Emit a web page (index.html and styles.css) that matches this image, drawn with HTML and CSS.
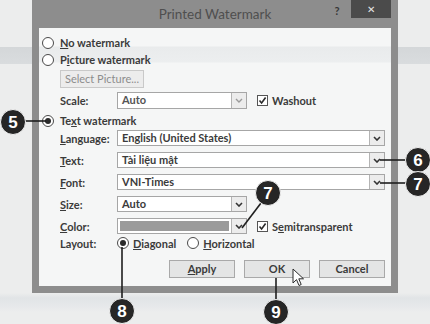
FILE: index.html
```html
<!doctype html>
<html lang="en">
<head>
    <meta charset="UTF-8">
    <title>Printed Watermark</title>
    <link rel="stylesheet" href="styles.css">
</head>
<body>
    <div class="page">
        <div class="dialog">
            <div class="titlebar">
                <span class="title">Printed Watermark</span>
                <span class="help">?</span>
                <span class="close">&#x2715;</span>
            </div>

            <div class="content">
                <div class="opt"><span class="radio"></span><span><u>N</u>o watermark</span></div>
                <div class="opt"><span class="radio"></span><span>P<u>i</u>cture watermark</span></div>
                <div class="select-btn">Select Picture...</div>

                <div class="field scale-row">
                    <span class="label">Scale:</span>
                    <div class="combo"><span class="val">Auto</span><span class="arrow"><svg width="8" height="5" viewBox="0 0 8 5"><path d="M1 1 L4 4 L7 1" fill="none" stroke="#9a9a9a" stroke-width="1.4"/></svg></span></div>
                    <div class="check"><span class="box"><svg width="9" height="9" viewBox="0 0 9 9"><path d="M1.5 4.5 L3.6 7 L7.6 1.5" fill="none" stroke="#2a2a2a" stroke-width="1.6"/></svg></span><span>Washout</span></div>
                </div>

                <div class="opt text-opt"><span class="radio on"></span><span>Te<u>x</u>t watermark</span></div>

                <div class="field first">
                    <span class="label"><u>L</u>anguage:</span>
                    <div class="combo wide"><span class="val">English (United States)</span><span class="arrow"><svg width="8" height="5" viewBox="0 0 8 5"><path d="M1 1 L4 4 L7 1" fill="none" stroke="#333" stroke-width="1.6"/></svg></span></div>
                </div>
                <div class="field">
                    <span class="label"><u>T</u>ext:</span>
                    <div class="combo wide"><span class="val">Tài liệu mật</span><span class="arrow"><svg width="8" height="5" viewBox="0 0 8 5"><path d="M1 1 L4 4 L7 1" fill="none" stroke="#333" stroke-width="1.6"/></svg></span></div>
                </div>
                <div class="field">
                    <span class="label"><u>F</u>ont:</span>
                    <div class="combo wide"><span class="val">VNI-Times</span><span class="arrow"><svg width="8" height="5" viewBox="0 0 8 5"><path d="M1 1 L4 4 L7 1" fill="none" stroke="#333" stroke-width="1.6"/></svg></span></div>
                </div>
                <div class="field">
                    <span class="label"><u>S</u>ize:</span>
                    <div class="combo"><span class="val">Auto</span><span class="arrow"><svg width="8" height="5" viewBox="0 0 8 5"><path d="M1 1 L4 4 L7 1" fill="none" stroke="#333" stroke-width="1.6"/></svg></span></div>
                </div>
                <div class="field">
                    <span class="label"><u>C</u>olor:</span>
                    <div class="combo"><span class="val swatch"></span><span class="arrow"><svg width="8" height="5" viewBox="0 0 8 5"><path d="M1 1 L4 4 L7 1" fill="none" stroke="#333" stroke-width="1.6"/></svg></span></div>
                    <div class="check"><span class="box"><svg width="9" height="9" viewBox="0 0 9 9"><path d="M1.5 4.5 L3.6 7 L7.6 1.5" fill="none" stroke="#2a2a2a" stroke-width="1.6"/></svg></span><span>S<u>e</u>mitransparent</span></div>
                </div>
                <div class="field layout-row">
                    <span class="label">Layout:</span>
                    <div class="layout-opts">
                        <span class="radio on"></span><span class="diag"><u>D</u>iagonal</span>
                        <span class="radio"></span><span><u>H</u>orizontal</span>
                    </div>
                </div>

                <div class="buttons">
                    <span class="btn apply"><u>A</u>pply</span>
                    <span class="btn ok">OK</span>
                    <span class="btn cancel">Cancel</span>
                </div>
            </div>
        </div>

        <svg class="callouts" width="430" height="324" viewBox="0 0 430 324">
            <g stroke="#1f1f1f" stroke-width="1.6" fill="none">
                <line x1="24" y1="121" x2="46" y2="121"/>
                <line x1="380" y1="160" x2="408" y2="160"/>
                <line x1="380" y1="183" x2="408" y2="183"/>
                <line x1="261" y1="203" x2="242" y2="228"/>
                <line x1="122" y1="247" x2="122" y2="300"/>
                <line x1="276" y1="278" x2="276" y2="301"/>
            </g>
            <g fill="#262626" stroke="#f2f2f2" stroke-width="1">
                <circle cx="13" cy="122" r="12.5"/>
                <circle cx="418" cy="160" r="12.5"/>
                <circle cx="418" cy="184" r="12.5"/>
                <circle cx="268" cy="193" r="12.5"/>
                <circle cx="122" cy="311" r="12.5"/>
                <circle cx="276" cy="312" r="12.5"/>
            </g>
            <g class="num" fill="#ffffff" text-anchor="middle">
                <text x="13" y="128">5</text>
                <text x="418" y="166">6</text>
                <text x="418" y="190">7</text>
                <text x="268" y="199">7</text>
                <text x="122" y="317">8</text>
                <text x="276" y="318">9</text>
            </g>
            <path d="M293 269 L293 283 L296.5 279.6 L299 285.5 L301.2 284.5 L298.8 278.8 L303.5 278.8 Z" fill="#ffffff" stroke="#2b2b2b" stroke-width="1"/>
        </svg>
    </div>
</body>
</html>
```

FILE: styles.css
```css
body {
    margin: 0;
    width: 430px;
    height: 324px;
    overflow: hidden;
    font-family: Lato, "Liberation Sans", sans-serif;
    font-size: 11px;
    color: #3b3b3b;
    background: linear-gradient(to bottom,
        #eceded 0, #eceded 47px,
        #d4d7d9 47px, #d9dcde 64px,
        #eceded 64px, #eceded 293px,
        #e1e4e6 298px, #e6e8ea 306px,
        #eceded 312px);
}

.page {
    position: relative;
    width: 430px;
    height: 324px;
}

.dialog {
    margin-left: 32px;
    width: 366px;
    box-sizing: border-box;
    border: 7px solid #8d8d8d;
    border-top: 0;
    background: #8d8d8d;
}

.titlebar {
    height: 28px;
    display: grid;
    grid-template-columns: 1fr 28px 40px;
    align-items: start;
}

.title {
    grid-column: 1 / -1;
    grid-row: 1;
    text-align: center;
    line-height: 28px;
    font-size: 13.5px;
    color: #4f4f4f;
}

.help {
    grid-column: 2;
    grid-row: 1;
    line-height: 22px;
    font-size: 11px;
    font-weight: 700;
    color: #383838;
    text-align: center;
}

.close {
    grid-column: 3;
    grid-row: 1;
    height: 18px;
    line-height: 18px;
    background: #4b4b4b;
    color: #e6e6e6;
    font-size: 10px;
    text-align: center;
}

.content {
    height: 258px;
    box-sizing: border-box;
    padding: 6px 0 8px;
    background: linear-gradient(to bottom,
        #f5f6f6 0, #f5f6f6 18px,
        #e9ebec 19px, #eceeef 34px,
        #f5f6f6 35px);
    font-weight: 700;
}

.opt {
    display: flex;
    align-items: center;
    gap: 6px;
    height: 17px;
    padding-left: 3px;
}

.text-opt {
    margin-top: 3px;
}

.radio {
    width: 10px;
    height: 10px;
    border: 1px solid #4a4a4a;
    border-radius: 50%;
    background: #ffffff;
    display: flex;
    align-items: center;
    justify-content: center;
    flex-shrink: 0;
}

.radio.on::after {
    content: "";
    width: 6px;
    height: 6px;
    border-radius: 50%;
    background: #2a2a2a;
}

.select-btn {
    margin: 2px 0 0 21px;
    width: 84px;
    height: 18px;
    box-sizing: border-box;
    border: 1px solid #c9c9c9;
    background: #ececec;
    color: #8c8c8c;
    font-weight: 400;
    text-align: center;
    line-height: 16px;
}

.field {
    display: grid;
    grid-template-columns: 57px auto auto;
    justify-content: start;
    align-items: center;
    height: 16px;
    margin-top: 6px;
    padding-left: 21px;
}

.field.first {
    margin-top: 1px;
}

.scale-row {
    margin-top: 4px;
    height: 17px;
}

.layout-row {
    margin-top: 1px;
}

.combo {
    width: 130px;
    height: 16px;
    box-sizing: border-box;
    border: 1px solid #a6a6a6;
    background: #ffffff;
    display: flex;
}

.scale-row .combo {
    height: 17px;
    color: #555;
}

.combo.wide {
    width: 268px;
}

.combo .val {
    flex: 1;
    padding-left: 4px;
    line-height: 14px;
    white-space: nowrap;
}

.combo .val.swatch {
    margin: 2px;
    background: #9b9b9b;
}

.combo .arrow {
    width: 14px;
    border-left: 1px solid #b4b4b4;
    background: #ececec;
    display: flex;
    align-items: center;
    justify-content: center;
}

.check {
    display: flex;
    align-items: center;
    gap: 4px;
    margin-left: 10px;
}

.box {
    width: 9px;
    height: 9px;
    border: 1px solid #555;
    background: #ffffff;
    display: flex;
}

.layout-opts {
    display: flex;
    align-items: center;
    gap: 4px;
}

.layout-opts .diag {
    margin-right: 7px;
}

.buttons {
    display: flex;
    justify-content: flex-end;
    gap: 9px;
    margin-top: 9px;
    padding-right: 6px;
}

.btn {
    width: 66px;
    height: 18px;
    box-sizing: border-box;
    border: 1px solid #a9a9a9;
    background: #e4e5e5;
    text-align: center;
    line-height: 16px;
}

.callouts {
    position: absolute;
    left: 0;
    top: 0;
    pointer-events: none;
}

.num {
    font-family: "Liberation Sans", sans-serif;
    font-size: 17px;
    font-weight: 700;
}
```
